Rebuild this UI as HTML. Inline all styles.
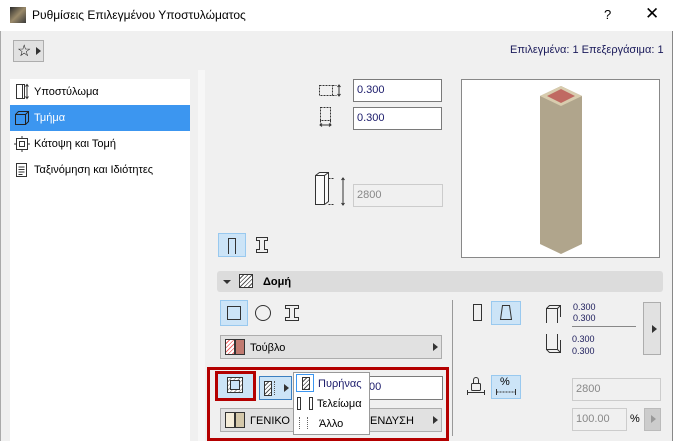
<!DOCTYPE html><html><head><meta charset="utf-8"><style>
body{margin:0;width:676px;height:441px;overflow:hidden;background:#f0f0f0;font-family:"Liberation Sans",sans-serif;font-size:11px;color:#000;position:relative}
.a{position:absolute}
.inp{position:absolute;background:#fff;border:1px solid #7a7a7a;box-sizing:border-box;font-size:11px;padding:4px 0 0 3px;color:#1a1a6a}
.dis{background:#f0f0f0;border-color:#ccc;color:#888}
.sel{position:absolute;background:#e1e1e1;border:1px solid #adadad;box-sizing:border-box}
.tb{position:absolute;background:#cce4f7;border:1px solid #99c9ef;box-sizing:border-box}
.tri{position:absolute;width:0;height:0;border-top:4px solid transparent;border-bottom:4px solid transparent;border-left:5px solid #333}
svg.a{overflow:visible}
</style></head><body>
<div class="a" style="left:0;top:0;width:676px;height:31px;background:#fff"></div>
<div class="a" style="left:10px;top:7px;width:16px;height:16px;background:linear-gradient(135deg,#2a2a2a,#9a8a6a 50%,#3a3a3a)"></div>
<div class="a" style="left:32px;top:8px;font-size:12px">Ρυθμίσεις Επιλεγμένου Υποστυλώματος</div>
<div class="a" style="left:604px;top:7px;font-size:13px">?</div>
<div class="a" style="left:645px;top:4px;font-size:17px">✕</div>
<div class="a" style="left:0;top:31px;width:1px;height:410px;background:#aaa"></div>
<div class="a" style="left:672px;top:31px;width:1px;height:410px;background:#888"></div>
<div class="a" style="left:673px;top:31px;width:3px;height:410px;background:#fff"></div>
<div class="a" style="left:13px;top:40px;width:31px;height:22px;background:#e1e1e1;border:1px solid #adadad;box-sizing:border-box"><span class="a" style="left:3px;top:0;font-size:16px">☆</span><div class="tri" style="left:22px;top:6px"></div></div>
<div class="a" style="left:510px;top:44px;font-size:11px;color:#1a1a5a">Επιλεγμένα: 1 Επεξεργάσιμα: 1</div>
<div class="a" style="left:10px;top:79px;width:180px;height:362px;background:#fff"></div>
<div class="a" style="left:10px;top:105px;width:180px;height:26px;background:#3c96f0"></div>
<svg class="a" style="left:14px;top:83px" width="16" height="18" fill="none" stroke="#333"><rect x="2.5" y="1.5" width="6" height="14"/><path d="M8.5 1.5h2v14h-2M13 2v13M11.5 3.5l1.5-2 1.5 2M11.5 13.5l1.5 2 1.5-2"/></svg>
<div class="a" style="left:34px;top:86px">Υποστύλωμα</div>
<svg class="a" style="left:14px;top:110px" width="16" height="16" fill="none" stroke="#222"><path d="M1.5 4.5h10v10h-10zM1.5 4.5l3-3h10v10l-3 3M11.5 4.5l3-3"/></svg>
<div class="a" style="left:34px;top:112px;color:#fff">Τμήμα</div>
<svg class="a" style="left:14px;top:136px" width="16" height="16" fill="none" stroke="#333"><rect x="2.5" y="2.5" width="11" height="11"/><rect x="5.5" y="5.5" width="5" height="5"/><path d="M8 0v2M8 14v2M0 8h2M14 8h2"/></svg>
<div class="a" style="left:34px;top:138px">Κάτοψη και Τομή</div>
<svg class="a" style="left:15px;top:162px" width="14" height="16" fill="none" stroke="#333"><rect x="1.5" y="1.5" width="10" height="13"/><path d="M3.5 5h6M3.5 7.5h6M3.5 10h6M3.5 12.5h4"/></svg>
<div class="a" style="left:34px;top:164px">Ταξινόμηση και Ιδιότητες</div>
<div class="a" style="left:198px;top:70px;width:7px;height:371px;background:#f7f7f7"></div>
<svg class="a" style="left:318px;top:83px" width="26" height="16" fill="none" stroke="#333" stroke-dasharray="2 1"><rect x="1.5" y="2.5" width="13" height="10"/><path d="M14.5 2.5h4M14.5 12.5h4" /><path d="M21 2v11" stroke-dasharray="none"/><path d="M19.5 4l1.5-2 1.5 2M19.5 11l1.5 2 1.5-2" stroke-dasharray="none"/></svg>
<svg class="a" style="left:318px;top:106px" width="18" height="24" fill="none" stroke="#333"><rect x="2.5" y="1.5" width="10" height="13" stroke-dasharray="2 1"/><path d="M2.5 14.5v6M12.5 14.5v6" stroke-dasharray="2 1"/><path d="M2 19h11M4 17.5l-2 1.5 2 1.5M11 17.5l2 1.5-2 1.5"/></svg>
<div class="inp" style="left:353px;top:79px;width:89px;height:23px">0.300</div>
<div class="inp" style="left:353px;top:107px;width:89px;height:23px">0.300</div>
<svg class="a" style="left:314px;top:171px" width="34" height="36" fill="none" stroke="#333"><path d="M1.5 4.5l4-3h9v29l-4 3h-9zM1.5 4.5h9v29M10.5 4.5l4-3" fill="#fafafa"/><path d="M14.5 7.5h6M14.5 33.5h6" stroke-dasharray="2 1"/><path d="M29 7v27M27.5 9l1.5-2 1.5 2M27.5 32l1.5 2 1.5-2"/></svg>
<div class="inp dis" style="left:353px;top:184px;width:90px;height:23px">2800</div>
<div class="a" style="left:461px;top:79px;width:199px;height:179px;background:#fff;border:1px solid #888;box-sizing:border-box"></div>
<svg class="a" style="left:540px;top:86px" width="44" height="170"><polygon points="0,10 21,0 42,10 42,158 21,168 0,158" fill="#b0a58c"/><polygon points="0,10 21,0 42,10 21,20" fill="#d8ccae"/><polygon points="7,10 21,3 35,10 21,17" fill="#c06a62"/></svg>
<div class="tb" style="left:218px;top:233px;width:28px;height:24px"></div>
<svg class="a" style="left:226px;top:237px" width="12" height="18" fill="none" stroke="#333"><path d="M2.5 17V1.5h7V17"/></svg>
<svg class="a" style="left:255px;top:236px" width="14" height="18" fill="none" stroke="#333"><path d="M1.5 1.5h11v3h-3v9h3v3h-11v-3h3v-9h-3z"/></svg>
<div class="a" style="left:217px;top:271px;width:446px;height:21px;background:#dcdcdc;border-radius:3px"></div>
<div class="a" style="left:223px;top:280px;border-left:4px solid transparent;border-right:4px solid transparent;border-top:4px solid #333"></div>
<div class="a" style="left:239px;top:274px;width:14px;height:14px;border:1px solid #333;background:repeating-linear-gradient(135deg,#fff 0 2px,#555 2px 3px);box-sizing:border-box"></div>
<div class="a" style="left:263px;top:276px;font-weight:bold">Δομή</div>
<div class="tb" style="left:220px;top:300px;width:28px;height:26px"></div>
<div class="a" style="left:227px;top:306px;width:14px;height:14px;border:1px solid #333;box-sizing:border-box"></div>
<div class="a" style="left:255px;top:305px;width:16px;height:16px;border:1px solid #333;border-radius:50%;box-sizing:border-box"></div>
<svg class="a" style="left:284px;top:304px" width="16" height="18" fill="none" stroke="#333"><path d="M1.5 1.5h13v3h-4v9h4v3h-13v-3h4v-9h-4z"/></svg>
<div class="sel" style="left:220px;top:335px;width:222px;height:24px"></div>
<div class="a" style="left:225px;top:339px;width:10px;height:16px;border:1px solid #333;background:repeating-linear-gradient(135deg,#fff 0 2px,#e66 2px 3px);box-sizing:border-box"></div>
<div class="a" style="left:235px;top:339px;width:10px;height:16px;border:1px solid #333;background:#c07a70;box-sizing:border-box"></div>
<div class="a" style="left:250px;top:342px">Τούβλο</div>
<div class="tri" style="left:433px;top:343px"></div>
<div class="a" style="left:207px;top:367px;width:242px;height:74px;border:3px solid #b40000;box-sizing:border-box"></div>
<div class="a" style="left:215px;top:371px;width:41px;height:30px;border:3px solid #b40000;box-sizing:border-box;background:#cce4f7"></div>
<div class="a" style="left:227px;top:377px;width:16px;height:16px;border:1px solid #333;box-sizing:border-box;background:repeating-linear-gradient(135deg,#fff 0 2px,#999 2px 3px)"><div style="margin:2px;width:10px;height:10px;border:1px solid #333;background:#cce4f7;box-sizing:border-box"></div></div>
<div class="a" style="left:259px;top:376px;width:33px;height:24px;background:#cce4f7;border:1px solid #3c7fc0;box-sizing:border-box"></div>
<div class="a" style="left:264px;top:381px;width:6px;height:13px;border:1px solid #333;background:repeating-linear-gradient(135deg,#fff 0 2px,#555 2px 3px)"></div>
<div class="a" style="left:274px;top:381px;width:1px;height:14px;border-left:1px dotted #555"></div>
<div class="tri" style="left:284px;top:384px"></div>
<div class="inp" style="left:365px;top:376px;width:78px;height:24px">00</div>
<div class="sel" style="left:220px;top:408px;width:222px;height:24px"></div>
<div class="a" style="left:225px;top:412px;width:10px;height:16px;border:1px solid #333;background:#f4ecd8;box-sizing:border-box"></div>
<div class="a" style="left:235px;top:412px;width:10px;height:16px;border:1px solid #333;background:#d4c8aa;box-sizing:border-box"></div>
<div class="a" style="left:250px;top:415px">ΓΕΝΙΚΟ -</div>
<div class="a" style="left:370px;top:415px">ΕΝΔΥΣΗ</div>
<div class="tri" style="left:433px;top:416px"></div>
<div class="a" style="left:293px;top:372px;width:77px;height:63px;background:#fff;border:1px solid #999;box-sizing:border-box"></div>
<div class="a" style="left:296px;top:374px;width:18px;height:18px;border:1px solid #3c96f0;box-sizing:border-box"></div>
<div class="a" style="left:302px;top:377px;width:6px;height:11px;border:1px solid #333;background:repeating-linear-gradient(135deg,#fff 0 2px,#555 2px 3px)"></div>
<div class="a" style="left:318px;top:378px;color:#1a1a6a">Πυρήνας</div>
<div class="a" style="left:297px;top:397px;width:2px;height:11px;border:1px solid #333"></div>
<div class="a" style="left:309px;top:397px;width:2px;height:11px;border:1px solid #333"></div>
<div class="a" style="left:317px;top:398px">Τελείωμα</div>
<div class="a" style="left:299px;top:417px;width:1px;height:12px;border-left:1px dotted #666"></div>
<div class="a" style="left:307px;top:417px;width:1px;height:12px;border-left:1px dotted #666"></div>
<div class="a" style="left:319px;top:418px">Άλλο</div>
<div class="a" style="left:452px;top:300px;width:1px;height:136px;background:#999"></div>
<div class="a" style="left:473px;top:304px;width:7px;height:15px;border:1px solid #333"></div>
<div class="tb" style="left:491px;top:301px;width:30px;height:24px"></div>
<svg class="a" style="left:498px;top:304px" width="16" height="18" fill="none" stroke="#333"><path d="M4.5 1.5h7l2 14h-11z"/></svg>
<svg class="a" style="left:545px;top:304px" width="18" height="20" fill="none" stroke="#333"><path d="M1.5 19V4.5h11V19M1.5 4.5l3-3h11V13M12.5 4.5l3-3"/></svg>
<div class="a" style="left:573px;top:302px;font-size:9px;color:#1a1a5a;line-height:11px">0.300<br>0.300</div>
<div class="a" style="left:572px;top:326px;width:64px;height:1px;background:#888"></div>
<svg class="a" style="left:545px;top:334px" width="18" height="20" fill="none" stroke="#333"><path d="M1.5 0v15.5h11V0M1.5 15.5l3 3h11V6M12.5 15.5l3 3"/></svg>
<div class="a" style="left:572px;top:333px;font-size:9px;color:#1a1a5a;line-height:12px">0.300<br>0.300</div>
<div class="sel" style="left:643px;top:302px;width:18px;height:53px"></div>
<div class="tri" style="left:652px;top:325px"></div>
<svg class="a" style="left:466px;top:375px" width="20" height="22" fill="none" stroke="#333"><path d="M7.5 8V5a2.5 2.5 0 0 1 5 0v3"/><rect x="5.5" y="8.5" width="9" height="7" rx="1"/><path d="M1.5 15v5M18.5 15v5M1.5 17.5h17"/></svg>
<div class="tb" style="left:491px;top:375px;width:30px;height:24px"></div>
<div class="a" style="left:500px;top:376px;font-size:11px">%</div>
<svg class="a" style="left:495px;top:388px" width="22" height="8" fill="none" stroke="#333"><path d="M1.5 1v6M20.5 1v6"/><path d="M1.5 4h19" stroke-dasharray="2 1"/></svg>
<div class="inp dis" style="left:572px;top:378px;width:89px;height:23px">2800</div>
<div class="inp dis" style="left:572px;top:408px;width:55px;height:23px">100.00</div>
<div class="a" style="left:630px;top:413px">%</div>
<div class="a" style="left:644px;top:408px;width:17px;height:23px;background:#ccc;border:1px solid #bbb;box-sizing:border-box"></div>
<div class="tri" style="left:651px;top:415px;border-left-color:#999"></div>
</body></html>
